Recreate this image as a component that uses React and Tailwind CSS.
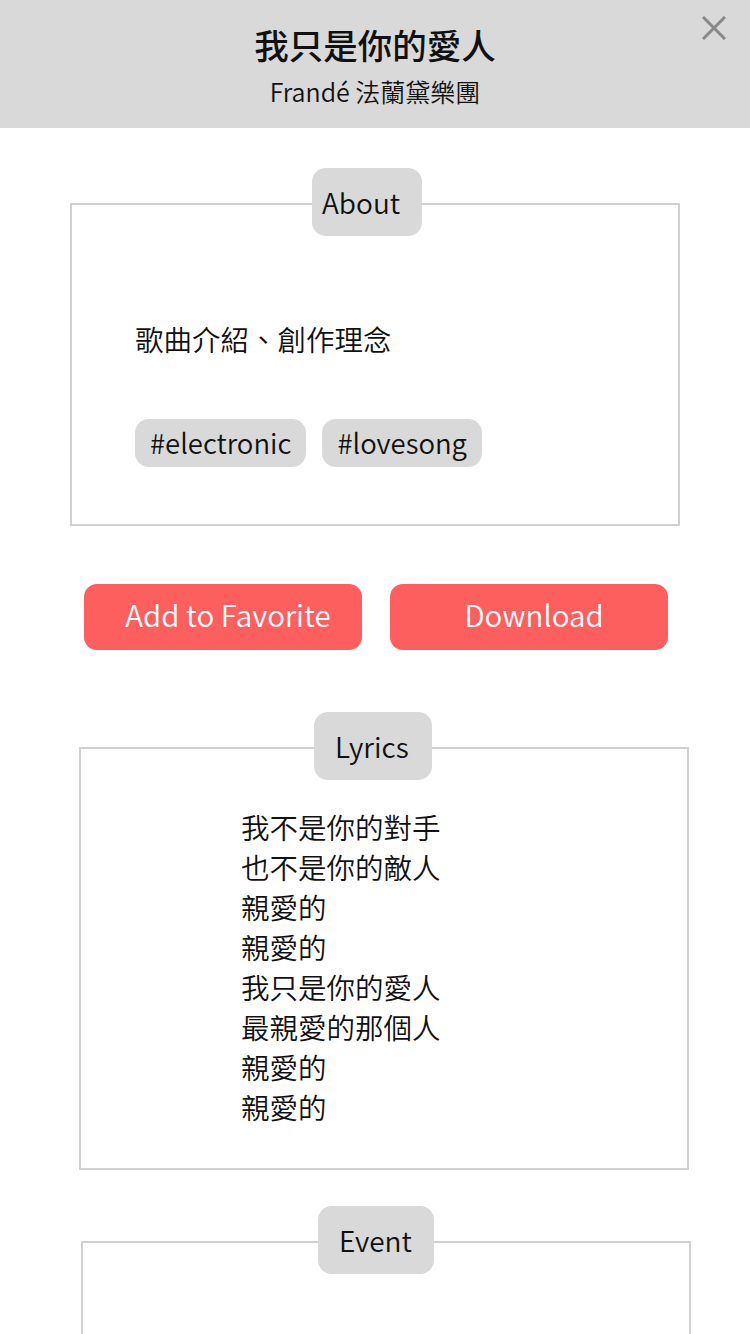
import React from "react";

const font = { fontFamily: '"Noto Sans CJK TC", "Noto Sans", sans-serif' };

const lyrics = [
  "我不是你的對手",
  "也不是你的敵人",
  "親愛的",
  "親愛的",
  "我只是你的愛人",
  "最親愛的那個人",
  "親愛的",
  "親愛的",
];

function Section({ title, className, pillClass, children }) {
  return (
    <div className={`relative border-2 border-[#d0d0d0] ${className}`}>
      <div
        className={`absolute top-[-37px] bg-[#d9d9d9] rounded-[14px] h-[68px] flex items-center text-[28px] text-[#111] ${pillClass}`}
      >
        {title}
      </div>
      {children}
    </div>
  );
}

export default function App() {
  return (
    <div className="w-[750px] h-[1334px] overflow-hidden bg-white font-[350]" style={font}>
      <header className="relative h-[128px] bg-[#d9d9d9] flex flex-col items-center">
        <h1 className="mt-[22px] text-[34.5px] leading-[44px] font-medium text-[#111]">
          我只是你的愛人
        </h1>
        <p className="mt-[8px] text-[25px] leading-[34px] text-[#111]">Frandé 法蘭黛樂團</p>
        <button className="absolute right-[24px] top-[16px] w-[24px] h-[24px]">
          <svg viewBox="0 0 24 24" width="24" height="24">
            <path d="M1 1 L23 23 M23 1 L1 23" stroke="#888" strokeWidth="3" fill="none" />
          </svg>
        </button>
      </header>

      <Section
        title="About"
        className="ml-[70px] mt-[75px] w-[610px] h-[323px]"
        pillClass="left-[240px] w-[110px] pl-[10px]"
      >
        <div className="pl-[63px] pt-[116px]">
          <p className="text-[28.5px] leading-[36px] text-[#111]">歌曲介紹、創作理念</p>
          <div className="mt-[62px] flex gap-[16px]">
            <span className="h-[48px] px-[15px] rounded-[14px] bg-[#d9d9d9] flex items-center text-[27.5px] text-[#111]">
              #electronic
            </span>
            <span className="h-[48px] px-[15px] rounded-[14px] bg-[#d9d9d9] flex items-center text-[27.5px] text-[#111]">
              #lovesong
            </span>
          </div>
        </div>
      </Section>

      <div className="mt-[58px] ml-[84px] flex gap-[28px]">
        <button className="w-[278px] h-[66px] pl-[10px] pb-[6px] rounded-[13px] bg-[#fd5e5e] text-white text-[29.5px]">
          Add to Favorite
        </button>
        <button className="w-[278px] h-[66px] pl-[10px] pb-[6px] rounded-[13px] bg-[#fd5e5e] text-white text-[29.5px]">
          Download
        </button>
      </div>

      <Section
        title="Lyrics"
        className="ml-[79px] mt-[97px] w-[610px] h-[423px]"
        pillClass="left-[233px] w-[118px] pl-[21px]"
      >
        <div className="pl-[160px] pt-[58px] text-[28.5px] leading-[40px] text-[#111]">
          {lyrics.map((line, i) => (
            <p key={i}>{line}</p>
          ))}
        </div>
      </Section>

      <Section
        title="Event"
        className="ml-[81px] mt-[71px] w-[610px] h-[200px]"
        pillClass="left-[235px] w-[116px] pl-[21px]"
      />
    </div>
  );
}
